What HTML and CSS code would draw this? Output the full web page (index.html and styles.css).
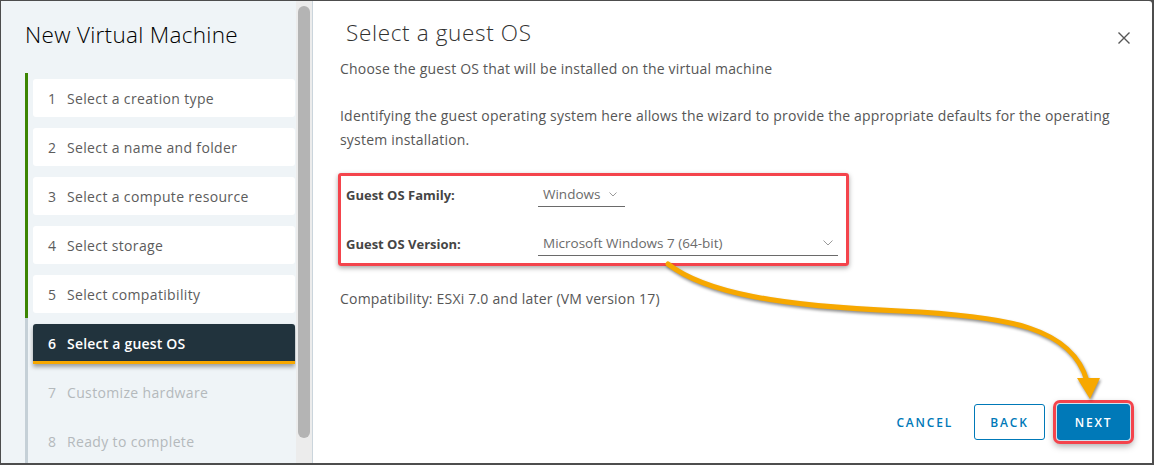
FILE: index.html
```html
<!DOCTYPE html>
<html lang="en">
<head>
<meta charset="utf-8">
<title>New Virtual Machine</title>
<link rel="stylesheet" href="styles.css">
</head>
<body>
<div class="modal">
  <aside class="nav">
    <div class="nav-inner">
      <h1 class="nav-title">New Virtual Machine</h1>
      <ol class="steps">
        <li class="step done"><div class="card"><span class="num">1</span>Select a creation type</div></li>
        <li class="step done"><div class="card"><span class="num">2</span>Select a name and folder</div></li>
        <li class="step done"><div class="card"><span class="num">3</span>Select a compute resource</div></li>
        <li class="step done"><div class="card"><span class="num">4</span>Select storage</div></li>
        <li class="step done"><div class="card"><span class="num">5</span>Select compatibility</div></li>
        <li class="step current"><div class="card"><span class="num">6</span>Select a guest OS</div></li>
        <li class="step todo"><div class="card"><span class="num">7</span>Customize hardware</div></li>
        <li class="step todo"><div class="card"><span class="num">8</span>Ready to complete</div></li>
      </ol>
    </div>
    <div class="scrollbar"><div class="thumb"></div></div>
  </aside>
  <main class="content">
    <header class="head">
      <h2 class="page-title">Select a guest OS</h2>
      <button class="close" aria-label="Close">
        <svg width="12" height="12" viewBox="0 0 12 12"><path d="M0.5 0.5 L11.5 11.5 M11.5 0.5 L0.5 11.5" stroke="#565656" stroke-width="1.4" fill="none"/></svg>
      </button>
    </header>
    <div class="body">
      <p class="lead">Choose the guest OS that will be installed on the virtual machine</p>
      <p class="desc">Identifying the guest operating system here allows the wizard to provide the appropriate defaults for the operating system installation.</p>
      <div class="form highlight">
        <div class="row">
          <label class="label">Guest OS Family:</label>
          <div class="select select-short"><span>Windows</span><svg class="chev" width="8" height="5" viewBox="0 0 8 5"><path d="M0.5 0.5 L4 4 L7.5 0.5" stroke="#9a9a9a" stroke-width="1" fill="none"/></svg></div>
        </div>
        <div class="row">
          <label class="label">Guest OS Version:</label>
          <div class="select select-long"><span>Microsoft Windows 7 (64-bit)</span><svg class="chev" width="10" height="6" viewBox="0 0 10 6"><path d="M0.5 0.5 L5 5 L9.5 0.5" stroke="#9a9a9a" stroke-width="1" fill="none"/></svg></div>
        </div>
      </div>
      <p class="compat">Compatibility: ESXi 7.0 and later (VM version 17)</p>
    </div>
    <footer class="foot">
      <button class="btn btn-flat">CANCEL</button>
      <button class="btn btn-outline">BACK</button>
      <button class="btn btn-primary highlight-btn">NEXT</button>
    </footer>
  </main>
</div>
<svg class="arrow" width="1154" height="465" viewBox="0 0 1154 465">
  <path d="M668,264 C705,293 780,306 900,311 C1010,316 1072,328 1087,381" stroke="#f7a800" stroke-width="5" fill="none" stroke-linecap="round"/>
  <polygon points="1077,378 1100,378 1090,399" fill="#f7a800"/>
</svg>
</body>
</html>
```
FILE: styles.css
```css
* { box-sizing: border-box; }
html, body { margin: 0; padding: 0; }
body {
  width: 1154px;
  height: 465px;
  background: #4d4d4d;
  font-family: "Open Sans", "Liberation Sans", sans-serif;
  color: #565656;
  overflow: hidden;
  position: relative;
}
.modal {
  margin: 1px 0 0 1px;
  width: 1151px;
  height: 462px;
  background: #fff;
  border-radius: 0 3px 0 0;
  display: flex;
  overflow: hidden;
}
.nav {
  display: flex;
  flex: 0 0 312px;
  background: #eff4f7;
  border-right: 1px solid #cbd5dc;
}
.nav-inner {
  flex: 0 0 295px;
  padding-top: 21px;
}
.nav-title {
  margin: 0 0 25px 24px;
  font-size: 22.5px;
  font-weight: 300;
  line-height: 26px;
  letter-spacing: 0.3px;
  color: #000;
}
.steps {
  list-style: none;
  margin: 0 1px 0 24px;
  padding: 0;
}
.step {
  height: 49px;
  padding: 6px 0 5px 5px;
  border-left: 3px solid #c5d0d7;
}
.step.done { border-left-color: #3d8603; }
.card {
  height: 38px;
  display: flex;
  align-items: center;
  padding-left: 15px;
  border-radius: 3px;
  font-size: 14px;
  letter-spacing: 0.35px;
  color: #5c5c5c;
}
.num { width: 19px; letter-spacing: 0; }
.done .card { background: #fff; }
.current .card {
  height: 40px;
  background: #21333d;
  color: #fff;
  font-weight: 600;
  letter-spacing: 0.2px;
  border-bottom: 3px solid #f7a800;
  border-radius: 3px 3px 0 0;
  box-shadow: 0 3px 4px rgba(0, 0, 0, 0.35);
  padding-top: 2px;
}
.todo .card { color: #b4b9bc; }
.scrollbar {
  flex: 0 0 16px;
  background: #ececec;
  padding: 5px 2px;
}
.thumb {
  width: 12px;
  height: 432px;
  background: #b4b4b4;
  border-radius: 6px;
}
.content {
  flex: 1;
  min-width: 0;
  display: flex;
  flex-direction: column;
  padding: 0 22px 23px 27px;
}
.head {
  display: flex;
  align-items: flex-start;
  justify-content: space-between;
  padding-top: 18px;
}
.page-title {
  margin: 0 0 0 6px;
  font-size: 22.5px;
  font-weight: 300;
  line-height: 28px;
  letter-spacing: 0.65px;
  color: #313131;
}
.close {
  border: 0;
  background: none;
  padding: 0;
  margin: 13px 0 0 0;
  width: 12px;
  height: 12px;
  display: block;
}
.close svg { display: block; }
.body { flex: 1; margin-top: 10px; }
.body p {
  margin: 0;
  font-size: 14px;
  line-height: 24px;
  letter-spacing: 0.2px;
  color: #565656;
}
.desc { margin-top: 23px !important; }
.form {
  margin: 21px 0 0 -2px;
  width: 511px;
  padding: 6px 0 7px 5px;
}
.highlight {
  border: 3px solid #f4444c;
  border-radius: 3px;
  box-shadow: 0 2px 5px rgba(0, 0, 0, 0.35);
}
.row {
  display: flex;
  align-items: flex-end;
  height: 25px;
}
.row + .row { margin-top: 24px; }
.label {
  flex: 0 0 192px;
  font-size: 13px;
  font-weight: 700;
  color: #454545;
  line-height: 24px;
  align-self: center;
}
.select {
  height: 25px;
  display: flex;
  align-items: center;
  border-bottom: 1px solid #6a6a6a;
  padding-left: 5px;
  font-size: 13.5px;
  color: #6b6b6b;
}
.select-short { width: 87px; }
.select-short .chev { margin-left: 9px; }
.select-long { width: 300px; justify-content: space-between; padding-right: 5px; }
.compat { margin-top: 21px !important; }
.foot {
  display: flex;
  justify-content: flex-end;
  align-items: center;
}
.btn {
  height: 36px;
  font-family: inherit;
  font-size: 12px;
  font-weight: 600;
  letter-spacing: 0.15em;
  border-radius: 3px;
  cursor: pointer;
}
.btn-flat {
  border: 0;
  background: none;
  color: #0079b8;
  padding: 0 12px;
  margin-right: 9px;
}
.btn-outline {
  border: 1px solid #0079b8;
  background: #fff;
  color: #0079b8;
  width: 71px;
  padding: 0;
  margin-right: 12px;
}
.btn-primary {
  border: 1px solid #0079b8;
  background: #0079b8;
  color: #fff;
  width: 73px;
  padding: 0;
}
.highlight-btn {
  box-shadow: 0 0 0 1px #cfe3ee, 0 0 0 4px #f4444c, 0 3px 7px 3px rgba(0, 0, 0, 0.35);
}
.arrow {
  position: absolute;
  left: 0;
  top: 0;
  pointer-events: none;
  filter: drop-shadow(1px 2px 1.5px rgba(0, 0, 0, 0.45));
}
```
